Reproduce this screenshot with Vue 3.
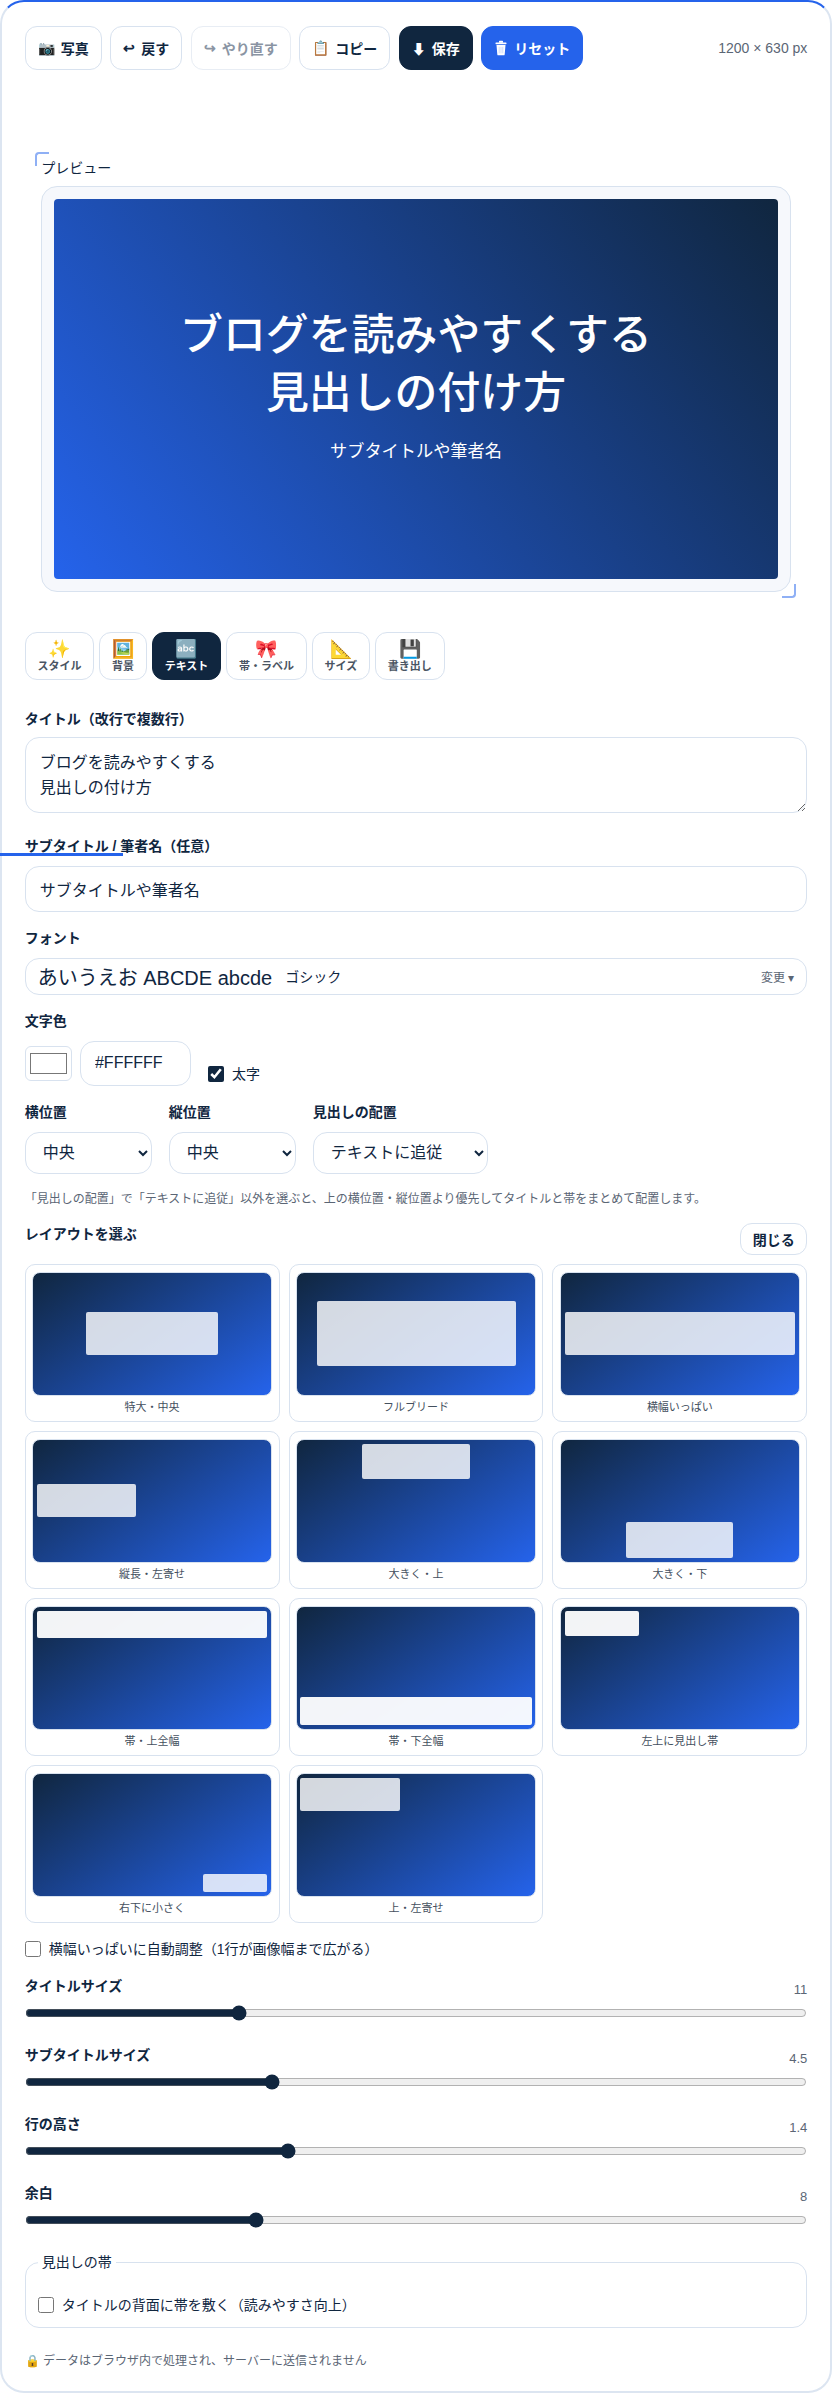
<script setup>
import { ref } from 'vue'

const toolbar = [
  { icon: '📷', label: '写真' },
  { icon: '↩', label: '戻す' },
  { icon: '↪', label: 'やり直す', disabled: true },
  { icon: '📋', label: 'コピー' },
  { icon: '⬇', label: '保存', kind: 'dark' },
  { trash: true, label: 'リセット', kind: 'blue' }
]

const tabs = [
  { icon: '✨', label: 'スタイル' },
  { icon: '🖼️', label: '背景' },
  { icon: '🔤', label: 'テキスト', active: true },
  { icon: '🎀', label: '帯・ラベル' },
  { icon: '📐', label: 'サイズ' },
  { icon: '💾', label: '書き出し' }
]

// x, y, w, h are measured on a 451 x 375 thumbnail
const layouts = [
  { label: '特大・中央', r: [100, 120, 251, 134], a: 0.82 },
  { label: 'フルブリード', r: [38, 87, 376, 201], a: 0.82 },
  { label: '横幅いっぱい', r: [8, 120, 435, 134], a: 0.82 },
  { label: '縦長・左寄せ', r: [8, 135, 188, 102], a: 0.82 },
  { label: '大きく・上', r: [124, 12, 204, 108], a: 0.82 },
  { label: '大きく・下', r: [123, 252, 203, 111], a: 0.82 },
  { label: '帯・上全幅', r: [8, 13, 435, 84], a: 0.95 },
  { label: '帯・下全幅', r: [7, 277, 438, 87], a: 0.95 },
  { label: '左上に見出し帯', r: [8, 13, 141, 75], a: 0.95 },
  { label: '右下に小さく', r: [322, 307, 121, 57], a: 0.82 },
  { label: '上・左寄せ', r: [7, 13, 189, 102], a: 0.82 }
]

function boxStyle(item) {
  const [x, y, w, h] = item.r
  return {
    left: (x / 451) * 100 + '%',
    top: (y / 375) * 100 + '%',
    width: (w / 451) * 100 + '%',
    height: (h / 375) * 100 + '%',
    background: `rgba(255, 255, 255, ${item.a})`
  }
}

const sliders = ref([
  { label: 'タイトルサイズ', value: 11, min: 4, max: 30, step: 1 },
  { label: 'サブタイトルサイズ', value: 4.5, min: 2, max: 10, step: 0.5 },
  { label: '行の高さ', value: 1.4, min: 1, max: 2.2, step: 0.1 },
  { label: '余白', value: 8, min: 1, max: 25, step: 1 }
])

const title = ref('ブログを読みやすくする\n見出しの付け方')
const subtitle = ref('サブタイトルや筆者名')
const color = ref('#ffffff')
const bold = ref(true)
</script>

<template>
  <main class="page">
    <div class="progress"></div>

    <header class="toolbar">
      <button
        v-for="b in toolbar"
        :key="b.label"
        class="tool"
        :class="b.kind"
        :disabled="b.disabled"
      >
        <svg v-if="b.trash" class="trash" viewBox="0 0 14 16" width="14" height="16">
          <rect x="5" y="0.8" width="4" height="2" rx="0.6" fill="#fff" />
          <rect x="1.5" y="2.4" width="11" height="1.8" rx="0.6" fill="#fff" />
          <path d="M2.5 5h9l-.8 9.4a1 1 0 0 1-1 .9H4.3a1 1 0 0 1-1-.9z" fill="#fff" />
          <path d="M5.2 6.8v6.6M7 6.8v6.6M8.8 6.8v6.6" stroke="#b9cdf8" stroke-width="0.7" />
        </svg>
        <span v-else>{{ b.icon }}</span>{{ b.label }}
      </button>
      <span class="dims">1200 × 630 px</span>
    </header>

    <section class="preview">
      <i class="corner tl"></i>
      <i class="corner br"></i>
      <div class="preview-label">プレビュー</div>
      <div class="frame">
        <div class="canvas">
          <div class="canvas-title">ブログを読みやすくする<br />見出しの付け方</div>
          <div class="canvas-sub">サブタイトルや筆者名</div>
        </div>
      </div>
    </section>

    <nav class="tabs">
      <button v-for="t in tabs" :key="t.label" class="tab" :class="{ active: t.active }">
        <span class="tab-icon">{{ t.icon }}</span>
        <span>{{ t.label }}</span>
      </button>
    </nav>

    <label class="label first">タイトル（改行で複数行）</label>
    <textarea v-model="title" class="field area"></textarea>

    <label class="label sub-label">サブタイトル / 筆者名（任意）</label>
    <input v-model="subtitle" class="field text" type="text" />

    <label class="label font-label">フォント</label>
    <button class="font-btn">
      <span class="font-sample">あいうえお ABCDE abcde</span>
      <span class="font-name">ゴシック</span>
      <span class="font-change">変更 ▾</span>
    </button>

    <label class="label color-label">文字色</label>
    <div class="color-row">
      <input v-model="color" class="swatch" type="color" />
      <input class="field hex" type="text" value="#FFFFFF" />
      <label class="check bold-check"><input v-model="bold" type="checkbox" />太字</label>
    </div>

    <div class="select-row">
      <div>
        <label class="label">横位置</label>
        <select class="pick w-a"><option>中央</option></select>
      </div>
      <div>
        <label class="label">縦位置</label>
        <select class="pick w-a"><option>中央</option></select>
      </div>
      <div>
        <label class="label">見出しの配置</label>
        <select class="pick w-b"><option>テキストに追従</option></select>
      </div>
    </div>
    <p class="hint">「見出しの配置」で「テキストに追従」以外を選ぶと、上の横位置・縦位置より優先してタイトルと帯をまとめて配置します。</p>

    <div class="layout-head">
      <label class="label layout-title">レイアウトを選ぶ</label>
      <button class="close">閉じる</button>
    </div>
    <div class="layout-grid">
      <button v-for="item in layouts" :key="item.label" class="layout">
        <span class="thumb"><span class="box" :style="boxStyle(item)"></span></span>
        <span class="layout-name">{{ item.label }}</span>
      </button>
    </div>

    <label class="check auto"><input type="checkbox" />横幅いっぱいに自動調整（1行が画像幅まで広がる）</label>

    <div class="sliders">
      <div v-for="s in sliders" :key="s.label" class="slider">
        <div class="slider-head">
          <label class="label">{{ s.label }}</label>
          <span class="value">{{ s.value }}</span>
        </div>
        <input v-model.number="s.value" type="range" :min="s.min" :max="s.max" :step="s.step" />
      </div>
    </div>

    <fieldset class="band">
      <legend>見出しの帯</legend>
      <label class="check"><input type="checkbox" />タイトルの背面に帯を敷く（読みやすさ向上）</label>
    </fieldset>

    <p class="note">🔒 データはブラウザ内で処理され、サーバーに送信されません</p>
  </main>
</template>

<style scoped>
.page {
  position: relative;
  box-sizing: border-box;
  width: 832px;
  height: 2393px;
  padding: 24px 22.67px 0;
  background: #fff;
  color: #10263f;
  border: 2px solid #dce5f1;
  border-top-color: #2563eb;
  border-radius: 24px;
}
.progress {
  position: absolute;
  z-index: 1;
  left: -2px;
  top: 851px;
  width: 123px;
  height: 3px;
  background: #2563eb;
}

.toolbar {
  display: flex;
  align-items: center;
  gap: 8.5px;
}
.tool {
  display: flex;
  align-items: center;
  gap: 6px;
  box-sizing: border-box;
  height: 44px;
  padding: 0 12px;
  background: #fff;
  color: #10263f;
  border: 1px solid #d8e2ef;
  border-radius: 12px;
  font: 700 14px "Liberation Sans", "Noto Sans CJK JP", sans-serif;
}
.tool:disabled {
  color: #8a94a3;
  border-color: #e8edf4;
}
.tool.dark {
  background: #10263f;
  border-color: #10263f;
  color: #fff;
}
.tool.blue {
  background: #2563eb;
  border-color: #2563eb;
  color: #fff;
}
.trash {
  flex: none;
}
.dims {
  margin-left: auto;
  font-size: 14px;
  color: #5b6675;
}

.preview {
  position: relative;
  margin-top: 88px;
  padding: 0 16.7px;
}
.preview-label {
  font-size: 14px;
  line-height: 20px;
}
.corner {
  position: absolute;
  box-sizing: border-box;
  width: 14px;
  height: 14px;
}
.corner.tl {
  left: 10.5px;
  top: -6px;
  border-left: 2px solid #8fb0f5;
  border-top: 2px solid #8fb0f5;
  border-top-left-radius: 4px;
}
.corner.br {
  right: 11px;
  bottom: -6px;
  border-right: 2px solid #8fb0f5;
  border-bottom: 2px solid #8fb0f5;
  border-bottom-right-radius: 4px;
}
.frame {
  box-sizing: border-box;
  margin-top: 8px;
  padding: 12px;
  background: #f6f8fc;
  border: 1px solid #d8e2ef;
  border-radius: 16px;
}
.canvas {
  display: flex;
  flex-direction: column;
  align-items: center;
  justify-content: center;
  box-sizing: border-box;
  height: 380px;
  padding-bottom: 15px;
  border-radius: 4px;
  color: #fff;
  text-align: center;
  background: linear-gradient(52deg, #2563eb, #10263f);
  font-family: "Noto Sans CJK JP", sans-serif;
}
.canvas-title {
  font-size: 42.9px;
  line-height: 58px;
  font-weight: 500;
}
.canvas-sub {
  margin-top: 20px;
  font-size: 17.2px;
  line-height: 24px;
}

.tabs {
  display: flex;
  gap: 5px;
  margin-top: 40px;
}
.tab {
  display: flex;
  flex-direction: column;
  align-items: center;
  justify-content: center;
  box-sizing: border-box;
  height: 48px;
  padding: 0 11.8px;
  background: #fff;
  color: #4a5563;
  border: 1px solid #d8e2ef;
  border-radius: 12px;
  font: 700 11px "Liberation Sans", "Noto Sans CJK JP", sans-serif;
  line-height: 14px;
}
.tab.active {
  background: #10263f;
  border-color: #10263f;
  color: #fff;
}
.tab-icon {
  font-size: 18px;
  line-height: 20px;
}

.label {
  display: block;
  font-size: 14px;
  font-weight: 700;
  line-height: 20px;
  color: #10263f;
}
.first {
  margin-top: 29px;
}
.field {
  display: block;
  box-sizing: border-box;
  width: 100%;
  margin-top: 8px;
  padding: 0 14px;
  background: #fff;
  color: #10263f;
  border: 1px solid #d8e2ef;
  border-radius: 14px;
  font: 16px "Liberation Sans", "Noto Sans CJK JP", sans-serif;
}
.area {
  height: 76px;
  padding-top: 12px;
  line-height: 25px;
  resize: vertical;
}
.sub-label {
  margin-top: 23px;
}
.text {
  height: 45.7px;
  margin-top: 10px;
}
.font-label {
  margin-top: 16px;
}
.font-btn {
  display: flex;
  align-items: center;
  width: 100%;
  height: 37.4px;
  margin-top: 10px;
  padding: 0 12px;
  background: #fff;
  color: #10263f;
  border: 1px solid #d8e2ef;
  border-radius: 14px;
  font-family: "Liberation Sans", "Noto Sans CJK JP", sans-serif;
}
.font-sample {
  font-size: 20px;
}
.font-name {
  margin-left: 13px;
  font-size: 14px;
}
.font-change {
  margin-left: auto;
  font-size: 12px;
  color: #5b6675;
}
.color-label {
  margin-top: 15.5px;
}
.color-row {
  display: flex;
  align-items: center;
  gap: 8px;
  margin-top: 10.3px;
}
.swatch {
  box-sizing: border-box;
  width: 47.3px;
  height: 35.4px;
  padding: 2px;
  background: #fff;
  border: 1px solid #d8e2ef;
  border-radius: 6px;
}
.hex {
  width: 111.5px;
  height: 45px;
  margin-top: 0;
}
.check {
  display: flex;
  align-items: center;
  gap: 8px;
  font-size: 14px;
  line-height: 20px;
  color: #10263f;
}
.check input {
  width: 16px;
  height: 16px;
  margin: 0;
  accent-color: #10263f;
}
.bold-check {
  margin: 22px 0 0 8.5px;
}
.select-row {
  display: flex;
  gap: 17px;
  margin-top: 16px;
}
.pick {
  display: block;
  box-sizing: border-box;
  height: 42.3px;
  margin-top: 9.7px;
  padding: 0 13px;
  background: #fff;
  color: #10263f;
  border: 1px solid #d8e2ef;
  border-radius: 14px;
  font: 16px "Liberation Sans", "Noto Sans CJK JP", sans-serif;
}
.w-a {
  width: 127px;
}
.w-b {
  width: 175px;
}
.hint {
  margin: 16px 0 0;
  font-size: 12px;
  line-height: 18px;
  color: #5b6675;
}
.layout-head {
  display: flex;
  justify-content: space-between;
  align-items: flex-start;
  margin-top: 14.7px;
}
.layout-title {
  margin-top: 1.5px;
}
.close {
  box-sizing: border-box;
  width: 67px;
  height: 32.5px;
  background: #fff;
  color: #10263f;
  border: 1px solid #d8e2ef;
  border-radius: 12px;
  font: 700 14px "Liberation Sans", "Noto Sans CJK JP", sans-serif;
}
.layout-grid {
  display: grid;
  grid-template-columns: repeat(3, 1fr);
  gap: 9px;
  margin-top: 9.3px;
}
.layout {
  display: flex;
  flex-direction: column;
  box-sizing: border-box;
  height: 158px;
  padding: 6.7px 6.2px;
  background: #fff;
  border: 1px solid #d8e2ef;
  border-radius: 10px;
}
.thumb {
  position: relative;
  display: block;
  box-sizing: border-box;
  width: 100%;
  height: 125px;
  border: 1px solid #d8e2ef;
  border-radius: 8px;
  overflow: hidden;
  background: linear-gradient(145deg, #10263f, #2563eb);
}
.box {
  position: absolute;
  border-radius: 2px;
}
.layout-name {
  margin-top: 3px;
  width: 100%;
  text-align: center;
  font-size: 11px;
  line-height: 16px;
  color: #44505e;
  font-family: "Liberation Sans", "Noto Sans CJK JP", sans-serif;
}
.auto {
  margin-top: 16px;
}
.sliders {
  margin-top: 16.7px;
}
.slider {
  height: 69px;
}
.slider-head {
  display: flex;
  justify-content: space-between;
  align-items: flex-end;
}
.value {
  font-size: 13px;
  line-height: 12px;
  color: #5b6675;
}
.slider input {
  display: block;
  width: 100%;
  margin: 9.3px 0 0;
  accent-color: #10263f;
}
.band {
  box-sizing: border-box;
  margin: 0;
  padding: 23px 12px 12px;
  border: 1px solid #d8e2ef;
  border-radius: 14px;
}
.band legend {
  padding: 0 4px;
  font-size: 14px;
  line-height: 20px;
}
.note {
  margin: 23.7px 0 0;
  font-size: 12px;
  line-height: 18px;
  color: #5b6675;
}
</style>

<style>
body {
  margin: 0;
  background: #fff;
  font-family: "Liberation Sans", "Noto Sans CJK JP", sans-serif;
}
</style>
